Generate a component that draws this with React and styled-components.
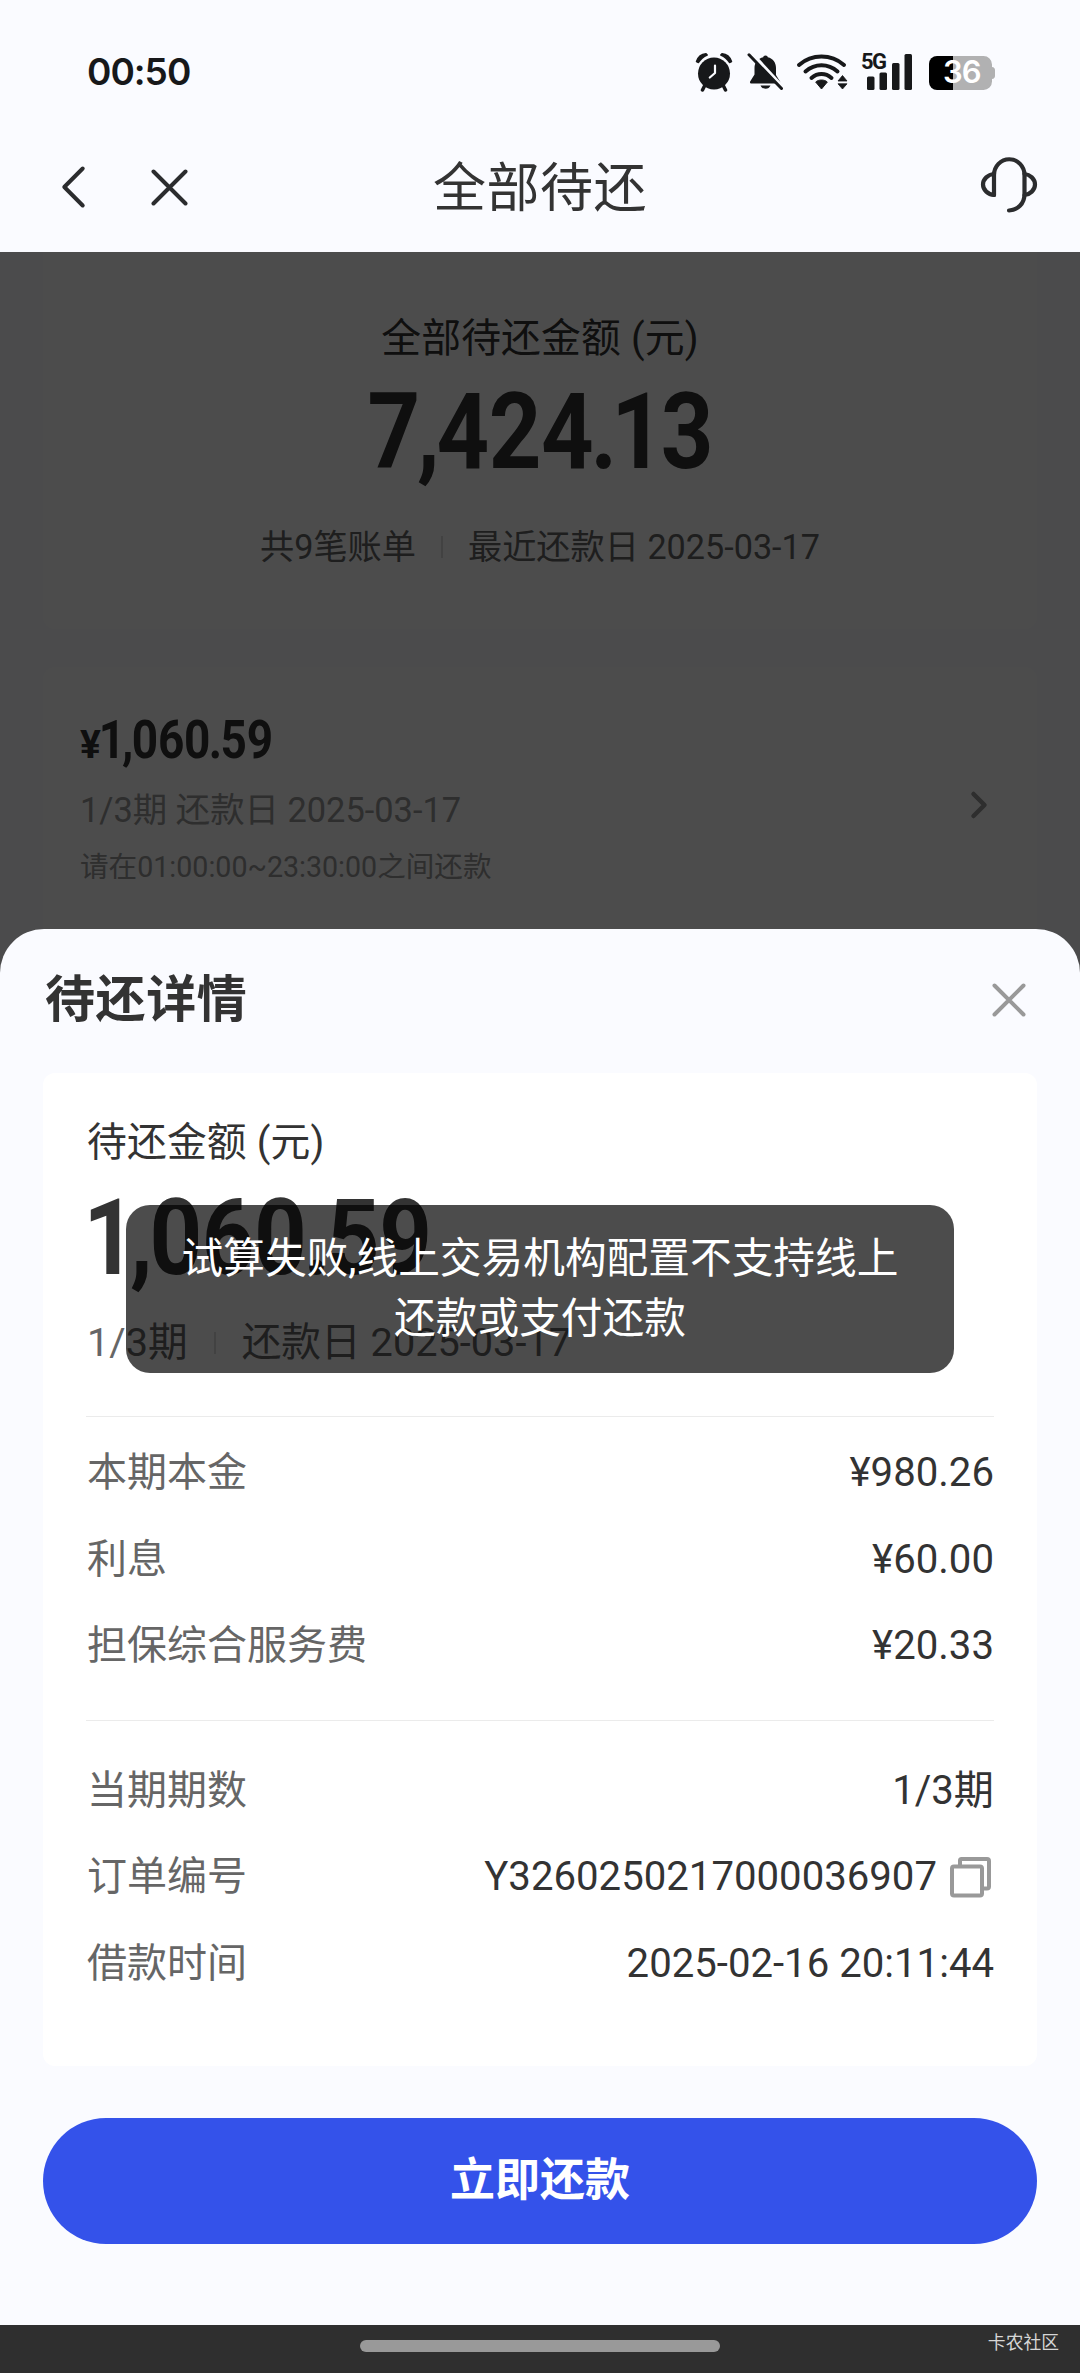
import React from "react";
import styled, { createGlobalStyle } from "styled-components";

const GlobalStyle = createGlobalStyle`
  * { box-sizing: border-box; }
  html, body { margin: 0; padding: 0; background: #fafbff; }
  body { font-family: Roboto, "Noto Sans CJK SC", sans-serif; color: #333; }
  svg { display: block; flex: none; }
`;

const Screen = styled.div`
  position: relative;
  display: flex;
  flex-direction: column;
  width: 1080px;
  height: 2373px;
  overflow: hidden;
  background: #fafbff;
`;

/* ---------- status bar ---------- */

const StatusBar = styled.div`
  display: flex;
  align-items: center;
  justify-content: space-between;
  height: 112px;
  padding: 32px 84px 0 87px;
  flex: none;
`;

const Clock = styled.div`
  font-family: Inter, sans-serif;
  font-weight: 600;
  font-size: 37px;
  line-height: 40px;
  letter-spacing: -1px;
  color: #17181a;
`;

const StatusIcons = styled.div`
  display: flex;
  align-items: center;
  height: 40px;
`;

const Signal = styled.div`
  position: relative;
  margin-left: 12px;
`;

const NetworkType = styled.span`
  position: absolute;
  left: 1px;
  top: 0;
  font-weight: 700;
  font-size: 22px;
  line-height: 20px;
  letter-spacing: -1.5px;
  color: #17181a;
`;

const Battery = styled.div`
  position: relative;
  margin-left: 16px;
`;

const BatteryLevel = styled.span`
  position: absolute;
  left: 14px;
  top: 3px;
  width: 36px;
  text-align: center;
  font-family: Inter, sans-serif;
  font-weight: 600;
  font-size: 31px;
  line-height: 34px;
  letter-spacing: -1px;
  color: #fff;
`;

/* ---------- navigation ---------- */

const NavBar = styled.div`
  display: grid;
  grid-template-columns: 1fr auto 1fr;
  align-items: center;
  height: 140px;
  padding: 14px 42px 0;
  flex: none;
`;

const NavLeft = styled.div`
  display: flex;
  align-items: center;
  gap: 64px;
  margin-top: -4px;
  padding-left: 18px;
`;

const NavTitle = styled.h1`
  margin: 0;
  font-size: 53px;
  font-weight: 400;
  line-height: 76px;
  letter-spacing: 0.5px;
  color: #333;
`;

const NavRight = styled.div`
  display: flex;
  justify-content: flex-end;
  margin-top: -8px;
`;

/* ---------- dimmed page ---------- */

const Backdrop = styled.section`
  position: relative;
  height: 723px;
  flex: none;
  padding: 0 43px;
  overflow: hidden;
  &::after {
    content: "";
    position: absolute;
    inset: 0;
    background: rgba(0, 0, 0, 0.7);
  }
`;

const SummaryCard = styled.div`
  display: flex;
  flex-direction: column;
  align-items: center;
  height: 377px;
  padding-top: 57px;
  border-radius: 0 0 12px 12px;
  background: #fff;
`;

const BillCard = styled.div`
  display: flex;
  align-items: flex-start;
  justify-content: space-between;
  height: 330px;
  margin-top: 38px;
  padding: 53px 48px 0 37px;
  border-radius: 12px;
  background: #fff;
`;

const BillText = styled.div`
  display: flex;
  flex-direction: column;
`;

const BillMeta = styled.div`
  margin-top: ${(p) => p.$gap}px;
  font-size: ${(p) => p.$size}px;
  line-height: 40px;
  color: #999;
  white-space: nowrap;
`;

const ChevronSlot = styled.div`
  margin-top: 70px;
`;

const Label = styled.div`
  padding-left: ${(p) => p.$indent || 0}px;
  font-size: 39.8px;
  line-height: 60px;
  letter-spacing: 0.15px;
  color: #333;
  white-space: nowrap;
`;

/* narrow DIN-style numerals */
const AmountBox = styled.div`
  display: flex;
  align-items: baseline;
  height: ${(p) => p.$line}px;
  margin-top: ${(p) => p.$gap || 0}px;
  font-size: ${(p) => p.$size}px;
  line-height: ${(p) => p.$line}px;
  font-weight: 700;
  color: #333;
  white-space: nowrap;
`;

const Digits = styled.span`
  display: inline-block;
  transform: scaleX(0.867);
  transform-origin: ${(p) => p.$origin || "left"} center;
  letter-spacing: -0.005em;
`;

const Tight = styled.span`
  margin: 0 -0.03em;
`;

const Currency = styled.span`
  font-size: 39px;
  letter-spacing: -1px;
`;

function Amount({ value, origin, currency, ...box }) {
  return (
    <AmountBox {...box}>
      {currency && <Currency>{currency}</Currency>}
      <Digits $origin={origin}>
        {value.split(/([,.1])/).map((part, i) =>
          /^[,.1]$/.test(part) ? <Tight key={i}>{part}</Tight> : part
        )}
      </Digits>
    </AmountBox>
  );
}

const InfoLine = styled.div`
  display: flex;
  align-items: center;
  margin-top: ${(p) => p.$gap}px;
  padding-left: ${(p) => p.$indent || 0}px;
  font-size: ${(p) => p.$size}px;
  line-height: 50px;
  color: #666;
  white-space: nowrap;
`;

const Bar = styled.i`
  width: 2px;
  height: 22px;
  margin: 0 ${(p) => p.$space}px;
  background: #ddd;
`;

/* ---------- bottom sheet ---------- */

const Sheet = styled.section`
  position: relative;
  display: flex;
  flex-direction: column;
  height: 1396px;
  margin-top: -46px;
  padding: 0 43px;
  flex: none;
  border-radius: 44px 44px 0 0;
  background: #fafbff;
`;

const SheetHeader = styled.div`
  display: flex;
  align-items: center;
  justify-content: space-between;
  height: 144px;
  padding: 0 11px 3px 2px;
`;

const SheetTitle = styled.h2`
  margin: 0;
  font-size: 50px;
  line-height: 70px;
  font-weight: 700;
  letter-spacing: 0.6px;
  color: #333;
`;

const DetailCard = styled.div`
  display: flex;
  flex-direction: column;
  height: 993px;
  padding: 40px 43px 0;
  border-radius: 12px;
  background: #fff;
`;

const Rows = styled.dl`
  margin: ${(p) => p.$gap || 0}px 0 0;
  padding: ${(p) => p.$pad};
  border-top: 1px solid #ebebeb;
`;

const Row = styled.div`
  display: flex;
  align-items: center;
  justify-content: space-between;
  height: 86.5px;
  font-size: 40px;
  line-height: 50px;
`;

const RowLabel = styled.dt`
  padding-left: 1px;
  color: #666;
`;

const RowValue = styled.dd`
  display: flex;
  align-items: center;
  gap: 12px;
  margin: 0;
  font-size: 40.15px;
  color: #333;
`;

const PayButton = styled.button`
  height: 126px;
  margin: 52px 0 0;
  padding: 0;
  border: 0;
  border-radius: 63px;
  background: #3452ea;
  color: #fff;
  font: 700 45px/60px Roboto, "Noto Sans CJK SC", sans-serif;
`;

const Toast = styled.div`
  position: absolute;
  left: 126px;
  top: 1205px;
  width: 828px;
  height: 168px;
  padding: 24px 50px;
  border-radius: 24px;
  background: rgba(0, 0, 0, 0.7);
  color: #fff;
  font-size: 41.7px;
  line-height: 60px;
  text-align: center;
  white-space: nowrap;
`;

const HomeBar = styled.footer`
  display: grid;
  grid-template-columns: 1fr 360px 1fr;
  align-items: flex-start;
  height: 48px;
  background: #2f2f2f;
`;

const HomeIndicator = styled.div`
  grid-column: 2;
  height: 12px;
  margin-top: 15px;
  border-radius: 6px;
  background: #999;
`;

const Credit = styled.span`
  justify-self: end;
  padding: 5px 21px 0 0;
  font-size: 17.8px;
  line-height: 26px;
  color: #d6d6d6;
`;

/* ---------- icons ---------- */

const INK = "#17181a";

const AlarmIcon = () => (
  <svg width="38" height="40" viewBox="0 0 38 40">
    <path d="M1.5 9.5C3 5 6.500 2 11 1.700L12.200 3C8.500 4.500 5.500 7 3.500 10.500Z" fill={INK} stroke={INK} strokeWidth="1.500" strokeLinejoin="round" />
    <path d="M36.500 9.500C35 5 31.500 2 27 1.700L25.800 3C29.500 4.500 32.500 7 34.500 10.500Z" fill={INK} stroke={INK} strokeWidth="1.500" strokeLinejoin="round" />
    <path d="M10 33L7.500 38M28 33L30.500 38" stroke={INK} strokeWidth="3.500" strokeLinecap="round" />
    <circle cx="19" cy="21.500" r="16" fill={INK} />
    <path d="M20 13.500V21L14.800 25.500" fill="none" stroke="#fafbff" strokeWidth="2.200" strokeLinecap="round" strokeLinejoin="round" />
  </svg>
);

const MutedBell = styled.svg`
  margin-left: 14px;
`;

const MutedBellIcon = () => (
  <MutedBell width="36" height="40" viewBox="0 0 36 40">
    <path d="M18.500 3.500c1.500 0 2.200 1 2.300 1.800C26 6.500 29 10.500 29 16v7l4 6.500c.6 1-.2 2-1.200 2H4.500c-1.300 0-2-1-1.200-2.200L7.500 22.500V16C7.500 10.500 11 6.500 16.200 5.300c.1-.8.8-1.800 2.300-1.800z" fill={INK} />
    <path d="M13.500 33.500h10c-.8 2-2.500 3.300-5 3.300s-4.200-1.300-5-3.300z" fill={INK} />
    <path d="M4 .5L38 37.500" stroke="#fafbff" strokeWidth="3.500" />
    <path d="M2 2.800L34.500 36.500" stroke={INK} strokeWidth="3" strokeLinecap="round" />
  </MutedBell>
);

const Wifi = styled.svg`
  margin-left: 13px;
`;

const WifiIcon = () => (
  <Wifi width="52" height="40" viewBox="0 0 52 40">
    <g fill="none" stroke={INK} strokeWidth="4" strokeLinecap="round">
      <path d="M3 13C16 1.800 35 1.800 48 13" />
      <path d="M9.500 19.500C19 11.300 32 11.300 41.500 19.500" />
      <path d="M15.500 26C21.500 20.800 29.500 20.800 35.500 26" />
    </g>
    <path d="M25.500 28c2.300 0 4.300.7 5.800 2L25.500 37 19.700 30c1.500-1.300 3.500-2 5.800-2z" fill={INK} stroke={INK} strokeWidth="1" strokeLinejoin="round" />
    <path d="M46.500 23.500L51 29H42ZM46.500 37L51 31.800H42Z" fill={INK} stroke={INK} strokeWidth=".8" strokeLinejoin="round" />
  </Wifi>
);

const SignalBars = () => (
  <svg width="53" height="40" viewBox="0 0 53 40">
    <g fill={INK}>
      <rect x="7" y="24.500" width="7.500" height="13.500" rx="1.500" />
      <rect x="19.500" y="20.500" width="7.500" height="17.500" rx="1.500" />
      <rect x="32" y="11" width="7.500" height="27" rx="1.500" />
      <rect x="44.500" y="2" width="7.500" height="36" rx="1.500" />
    </g>
  </svg>
);

const BatteryShape = () => (
  <svg width="67" height="40" viewBox="0 0 67 40">
    <path d="M24 4H54.500a8.500 8.500 0 0 1 8.500 8.500V15c2 0 3 1.500 3 3v6c0 1.500-1 3-3 3v2.500a8.500 8.500 0 0 1-8.500 8.500H24Z" fill="#b1b1b2" />
    <path d="M24 4H8A8 8 0 0 0 0 12V30a8 8 0 0 0 8 8H24Z" fill="#000" />
  </svg>
);

const BackIcon = () => (
  <svg width="27" height="44" viewBox="0 0 27 44" fill="none" stroke="#2b2c2e" strokeWidth="4" strokeLinecap="round" strokeLinejoin="round">
    <path d="M22.700 3.500L4.300 22L22.700 40.500" />
  </svg>
);

const CrossIcon = ({ size, color }) => (
  <svg width={size} height={size} viewBox={`0 0 ${size} ${size}`} fill="none" stroke={color} strokeWidth="4" strokeLinecap="round">
    <path d={`M2.500 2.500L${size - 2.5} ${size - 2.5}M${size - 2.5} 2.500L2.500 ${size - 2.5}`} />
  </svg>
);

const HeadsetIcon = () => (
  <svg width="58" height="58" viewBox="0 0 58 58" fill="none" stroke="#2b2c2e" strokeWidth="4.200" strokeLinecap="round" strokeLinejoin="round">
    <path d="M14 39V19a15 15.500 0 0 1 30.500 0V38c0 10-7 16-15.500 16.500" />
    <path d="M14 18C8 18.500 3 23 3 28.500S8 38.500 14 39" />
    <path d="M44.500 18C50 18.500 55 23 55 28.500S50 38.500 44.500 39" />
  </svg>
);

const ChevronIcon = () => (
  <svg width="20" height="30" viewBox="0 0 20 30" fill="none" stroke="#999" strokeWidth="4.500" strokeLinecap="round" strokeLinejoin="round">
    <path d="M4.500 4L15.500 15L4.500 26" />
  </svg>
);

const CopyIcon = () => (
  <svg width="45" height="42" viewBox="0 0 45 42" fill="none" stroke="#999" strokeWidth="4" strokeLinejoin="round">
    <path d="M11 10V4.500a1.500 1.500 0 0 1 1.500-1.500H38a2 2 0 0 1 2 2V30.500a2 2 0 0 1-2 2H34" />
    <rect x="3" y="10.500" width="30" height="29" rx="2" />
  </svg>
);

/* ---------- data ---------- */

const feeRows = [
  ["本期本金", "¥980.26"],
  ["利息", "¥60.00"],
  ["担保综合服务费", "¥20.33"],
];

const orderRows = [
  ["当期期数", "1/3期"],
  ["订单编号", "Y3260250217000036907", true],
  ["借款时间", "2025-02-16 20:11:44"],
];

const DetailRows = ({ rows, pad, gap }) => (
  <Rows $pad={pad} $gap={gap}>
    {rows.map(([label, value, copyable]) => (
      <Row key={label}>
        <RowLabel>{label}</RowLabel>
        <RowValue>
          {value}
          {copyable && <CopyIcon />}
        </RowValue>
      </Row>
    ))}
  </Rows>
);

export default function App() {
  return (
    <>
      <GlobalStyle />
      <Screen>
        <StatusBar>
          <Clock>00:50</Clock>
          <StatusIcons>
            <AlarmIcon />
            <MutedBellIcon />
            <WifiIcon />
            <Signal>
              <SignalBars />
              <NetworkType>5G</NetworkType>
            </Signal>
            <Battery>
              <BatteryShape />
              <BatteryLevel>36</BatteryLevel>
            </Battery>
          </StatusIcons>
        </StatusBar>

        <NavBar>
          <NavLeft>
            <BackIcon />
            <CrossIcon size={37} color="#2b2c2e" />
          </NavLeft>
          <NavTitle>全部待还</NavTitle>
          <NavRight>
            <HeadsetIcon />
          </NavRight>
        </NavBar>

        <Backdrop>
          <SummaryCard>
            <Label>全部待还金额 (元)</Label>
            <Amount value="7,424.13" origin="center" $size={106} $line={82} $gap={22} />
            <InfoLine $size={34.2} $gap={49}>
              共9笔账单
              <Bar $space={25} />
              最近还款日 2025-03-17
            </InfoLine>
          </SummaryCard>
          <BillCard>
            <BillText>
              <Amount currency="¥" value="1,060.59" $size={53} $line={40} />
              <BillMeta $size={34.4} $gap={30}>1/3期 还款日 2025-03-17</BillMeta>
              <BillMeta $size={28.6} $gap={17}>请在01:00:00~23:30:00之间还款</BillMeta>
            </BillText>
            <ChevronSlot>
              <ChevronIcon />
            </ChevronSlot>
          </BillCard>
        </Backdrop>

        <Sheet>
          <SheetHeader>
            <SheetTitle>待还详情</SheetTitle>
            <CrossIcon size={34} color="#999" />
          </SheetHeader>
          <DetailCard>
            <Label $indent={1}>待还金额 (元)</Label>
            <Amount value="1,060.59" $size={106} $line={82} $gap={24} />
            <InfoLine $size={39.7} $gap={39} $indent={1}>
              1/3期
              <Bar $space={26} />
              还款日 2025-03-17
            </InfoLine>
            <DetailRows rows={feeRows} pad="13px 0 30px" gap={48} />
            <DetailRows rows={orderRows} pad="27px 0 0" />
          </DetailCard>
          <PayButton>立即还款</PayButton>
        </Sheet>

        <HomeBar>
          <HomeIndicator />
          <Credit>卡农社区</Credit>
        </HomeBar>

        <Toast>
          试算失败,线上交易机构配置不支持线上
          <br />
          还款或支付还款
        </Toast>
      </Screen>
    </>
  );
}
